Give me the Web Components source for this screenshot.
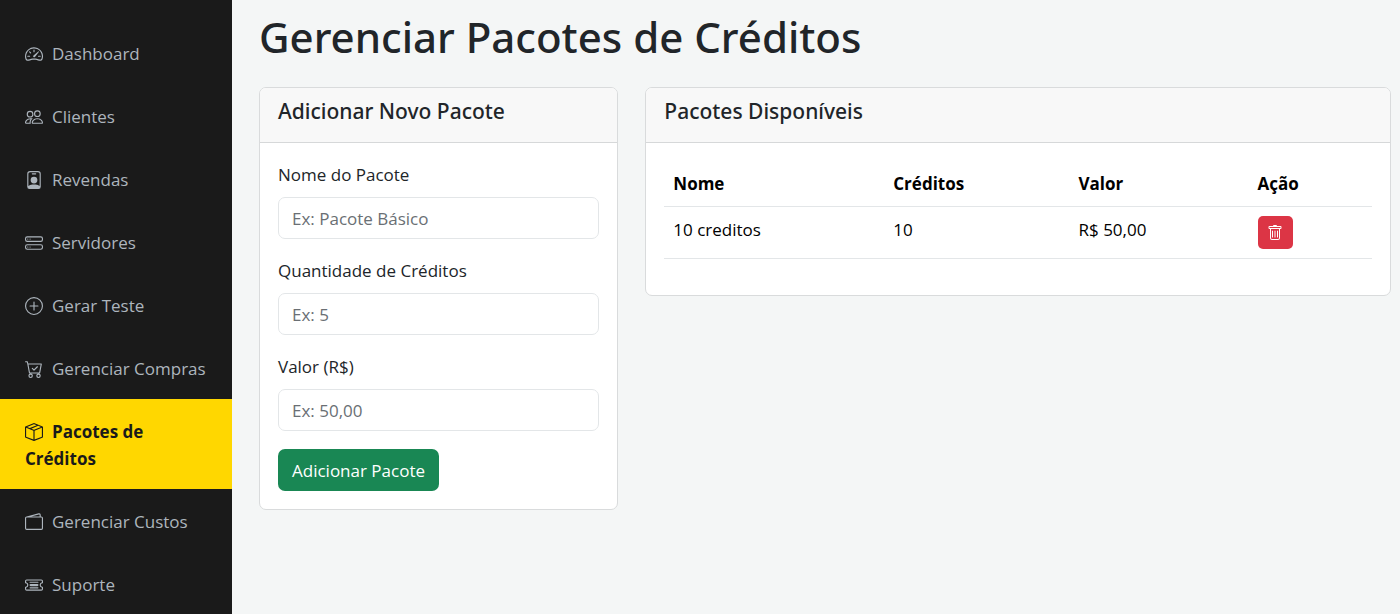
<!DOCTYPE html>
<html lang="pt-BR">
<head>
<meta charset="utf-8">
<meta name="viewport" content="width=device-width, initial-scale=1">
<title>Gerenciar Pacotes de Créditos</title>
<style>
  html, body { margin: 0; min-height: 100%; }
  body {
    background: #f4f6f6;
    color: #212529;
    font: 17px/27px "Open Sans", "Noto Sans", sans-serif;
  }
</style>
</head>
<body>
<app-shell>
  <side-nav slot="nav">
    <nav-item icon="speedometer">Dashboard</nav-item>
    <nav-item icon="people">Clientes</nav-item>
    <nav-item icon="badge">Revendas</nav-item>
    <nav-item icon="servers">Servidores</nav-item>
    <nav-item icon="plus">Gerar Teste</nav-item>
    <nav-item icon="cart">Gerenciar Compras</nav-item>
    <nav-item icon="box" active>Pacotes de Créditos</nav-item>
    <nav-item icon="wallet">Gerenciar Custos</nav-item>
    <nav-item icon="ticket">Suporte</nav-item>
  </side-nav>
  <page-title>Gerenciar Pacotes de Créditos</page-title>
  <card-row>
    <ui-card>
      <span slot="title">Adicionar Novo Pacote</span>
      <package-form></package-form>
    </ui-card>
    <ui-card>
      <span slot="title">Pacotes Disponíveis</span>
      <package-table></package-table>
    </ui-card>
  </card-row>
</app-shell>

<script>
const icons = {
  speedometer: '<path d="M8 4a.5.5 0 0 1 .5.5V6a.5.5 0 0 1-1 0V4.5A.5.5 0 0 1 8 4M3.732 5.732a.5.5 0 0 1 .707 0l.915.914a.5.5 0 1 1-.708.708l-.914-.915a.5.5 0 0 1 0-.707M2 10a.5.5 0 0 1 .5-.5h1.586a.5.5 0 0 1 0 1H2.5A.5.5 0 0 1 2 10m9.5 0a.5.5 0 0 1 .5-.5h1.5a.5.5 0 0 1 0 1H12a.5.5 0 0 1-.5-.5m.754-4.246a.39.39 0 0 0-.527-.02L7.547 9.31a.91.91 0 1 0 1.302 1.258l3.434-4.297a.39.39 0 0 0-.029-.518z"/><path fill-rule="evenodd" d="M0 10a8 8 0 1 1 15.547 2.661c-.442 1.253-1.845 1.602-2.932 1.25C11.309 13.488 9.475 13 8 13c-1.474 0-3.31.488-4.615.911-1.087.352-2.49.003-2.932-1.25A8 8 0 0 1 0 10m8-7a7 7 0 0 0-6.603 9.329c.203.575.923.876 1.68.63C4.397 12.533 6.358 12 8 12s3.604.532 4.923.96c.757.245 1.477-.056 1.68-.631A7 7 0 0 0 8 3"/>',
  people: '<path d="M15 14s1 0 1-1-1-4-5-4-5 3-5 4 1 1 1 1zm-7.978-1L7 12.996c.001-.264.167-1.03.76-1.72C8.312 10.629 9.282 10 11 10c1.717 0 2.687.63 3.24 1.276.593.69.758 1.457.76 1.72l-.008.002-.014.002zM11 7a2 2 0 1 0 0-4 2 2 0 0 0 0 4m3-2a3 3 0 1 1-6 0 3 3 0 0 1 6 0M6.936 9.28a6 6 0 0 0-1.23-.247A7 7 0 0 0 5 9c-4 0-5 3-5 4q0 1 1 1h4.216A2.24 2.24 0 0 1 5 13c0-1.01.377-2.042 1.09-2.904.243-.294.526-.569.846-.816M4.92 10A5.5 5.5 0 0 0 4 13H1c0-.26.164-1.03.76-1.724.545-.636 1.492-1.256 3.16-1.275ZM1.5 5.5a3 3 0 1 1 6 0 3 3 0 0 1-6 0m3-2a2 2 0 1 0 0 4 2 2 0 0 0 0-4"/>',
  badge: '<path d="M6.5 2a.5.5 0 0 0 0 1h3a.5.5 0 0 0 0-1zM11 8a3 3 0 1 1-6 0 3 3 0 0 1 6 0"/><path d="M4.5 0A2.5 2.5 0 0 0 2 2.5V14a2 2 0 0 0 2 2h8a2 2 0 0 0 2-2V2.5A2.5 2.5 0 0 0 11.5 0zM3 2.5A1.5 1.5 0 0 1 4.5 1h7A1.5 1.5 0 0 1 13 2.5v10.795a4.2 4.2 0 0 0-.776-.492C11.392 12.387 10.063 12 8 12s-3.392.387-4.224.803a4.2 4.2 0 0 0-.776.492z"/>',
  servers: '<path d="M14 10a1 1 0 0 1 1 1v1a1 1 0 0 1-1 1H2a1 1 0 0 1-1-1v-1a1 1 0 0 1 1-1zM2 9a2 2 0 0 0-2 2v1a2 2 0 0 0 2 2h12a2 2 0 0 0 2-2v-1a2 2 0 0 0-2-2z"/><path d="M5 11.5a.5.5 0 1 1-1 0 .5.5 0 0 1 1 0m-2 0a.5.5 0 1 1-1 0 .5.5 0 0 1 1 0M14 3a1 1 0 0 1 1 1v1a1 1 0 0 1-1 1H2a1 1 0 0 1-1-1V4a1 1 0 0 1 1-1zM2 2a2 2 0 0 0-2 2v1a2 2 0 0 0 2 2h12a2 2 0 0 0 2-2V4a2 2 0 0 0-2-2z"/><path d="M5 4.5a.5.5 0 1 1-1 0 .5.5 0 0 1 1 0m-2 0a.5.5 0 1 1-1 0 .5.5 0 0 1 1 0"/>',
  plus: '<path d="M8 15A7 7 0 1 1 8 1a7 7 0 0 1 0 14m0 1A8 8 0 1 0 8 0a8 8 0 0 0 0 16"/><path d="M8 4a.5.5 0 0 1 .5.5v3h3a.5.5 0 0 1 0 1h-3v3a.5.5 0 0 1-1 0v-3h-3a.5.5 0 0 1 0-1h3v-3A.5.5 0 0 1 8 4"/>',
  cart: '<path d="M11.354 6.354a.5.5 0 0 0-.708-.708L8 8.293 6.854 7.146a.5.5 0 1 0-.708.708l1.5 1.5a.5.5 0 0 0 .708 0z"/><path d="M.5 1a.5.5 0 0 0 0 1h1.11l.401 1.607 1.498 7.985A.5.5 0 0 0 4 12h1a2 2 0 1 0 0 4 2 2 0 0 0 0-4h7a2 2 0 1 0 0 4 2 2 0 0 0 0-4h1a.5.5 0 0 0 .491-.408l1.5-8A.5.5 0 0 0 14.5 3H2.89l-.405-1.621A.5.5 0 0 0 2 1zm3.915 10L3.102 4h10.796l-1.313 7zM6 14a1 1 0 1 1-2 0 1 1 0 0 1 2 0m7 0a1 1 0 1 1-2 0 1 1 0 0 1 2 0"/>',
  box: '<path d="M8.186 1.113a.5.5 0 0 0-.372 0L1.846 3.5l2.404.961L10.404 2zm3.564 1.426L5.596 5 8 5.961 14.154 3.5zm3.25 1.7-6.5 2.6v7.922l6.5-2.6V4.24zM7.5 14.762V6.838L1 4.239v7.923zM7.443.184a1.5 1.5 0 0 1 1.114 0l7.129 2.852A.5.5 0 0 1 16 3.5v8.662a1 1 0 0 1-.629.928l-7.185 2.874a.5.5 0 0 1-.372 0L.63 13.09a1 1 0 0 1-.63-.928V3.5a.5.5 0 0 1 .314-.464z"/>',
  wallet: '<path d="M12.136.326A1.5 1.5 0 0 1 14 1.78V3h.5A1.5 1.5 0 0 1 16 4.5v9a1.5 1.5 0 0 1-1.5 1.5h-13A1.5 1.5 0 0 1 0 13.5v-9a1.5 1.5 0 0 1 1.432-1.499zM5.562 3H13V1.78a.5.5 0 0 0-.621-.484zM1.5 4a.5.5 0 0 0-.5.5v9a.5.5 0 0 0 .5.5h13a.5.5 0 0 0 .5-.5v-9a.5.5 0 0 0-.5-.5z"/>',
  ticket: '<path d="M4 5.5a.5.5 0 0 1 .5-.5h7a.5.5 0 0 1 0 1h-7a.5.5 0 0 1-.5-.5m0 5a.5.5 0 0 1 .5-.5h7a.5.5 0 0 1 0 1h-7a.5.5 0 0 1-.5-.5M5 7a1 1 0 0 0 0 2h6a1 1 0 1 0 0-2z"/><path d="M0 4.5A1.5 1.5 0 0 1 1.5 3h13A1.5 1.5 0 0 1 16 4.5V6a.5.5 0 0 1-.5.5 1.5 1.5 0 0 0 0 3 .5.5 0 0 1 .5.5v1.5a1.5 1.5 0 0 1-1.5 1.5h-13A1.5 1.5 0 0 1 0 11.5V10a.5.5 0 0 1 .5-.5 1.5 1.5 0 1 0 0-3A.5.5 0 0 1 0 6zM1.5 4a.5.5 0 0 0-.5.5v1.05a2.5 2.5 0 0 1 0 4.9v1.05a.5.5 0 0 0 .5.5h13a.5.5 0 0 0 .5-.5v-1.05a2.5 2.5 0 0 1 0-4.9V4.5a.5.5 0 0 0-.5-.5z"/>',
  trash: '<path d="M5.5 5.5A.5.5 0 0 1 6 6v6a.5.5 0 0 1-1 0V6a.5.5 0 0 1 .5-.5m2.5 0a.5.5 0 0 1 .5.5v6a.5.5 0 0 1-1 0V6a.5.5 0 0 1 .5-.5m3 .5a.5.5 0 0 0-1 0v6a.5.5 0 0 0 1 0z"/><path d="M14.5 3a1 1 0 0 1-1 1H13v9a2 2 0 0 1-2 2H5a2 2 0 0 1-2-2V4h-.5a1 1 0 0 1-1-1V2a1 1 0 0 1 1-1H6a1 1 0 0 1 1-1h2a1 1 0 0 1 1 1h3.5a1 1 0 0 1 1 1zM4.118 4 4 4.059V13a1 1 0 0 0 1 1h6a1 1 0 0 0 1-1V4.059L11.882 4zM2.5 3h11V2h-11z"/>'
};

class BaseElement extends HTMLElement {
  constructor() {
    super();
    this.attachShadow({ mode: 'open' });
  }
  connectedCallback() {
    this.shadowRoot.innerHTML = this.render();
  }
}

class UiIcon extends BaseElement {
  render() {
    return `<style>
      :host { display: inline-block; width: 18px; height: 18px; }
      svg { display: block; width: 100%; height: 100%; fill: currentColor; }
    </style>
    <svg viewBox="0 0 16 16" aria-hidden="true">${icons[this.getAttribute('name')]}</svg>`;
  }
}

class AppShell extends BaseElement {
  render() {
    return `<style>
      :host { display: grid; grid-template-columns: 232px minmax(0, 1fr); min-height: 100vh; }
      main { padding: 10px 9px 27px 27px; }
    </style>
    <slot name="nav"></slot>
    <main><slot></slot></main>`;
  }
}

class SideNav extends BaseElement {
  render() {
    return `<style>
      :host { display: block; background: #1a1a1a; }
      nav { display: flex; flex-direction: column; padding-top: 21px; }
    </style>
    <nav><slot></slot></nav>`;
  }
}

class NavItem extends BaseElement {
  render() {
    return `<style>
      :host { display: block; color: #adb5bd; }
      :host([active]) { background: #ffd700; color: #1a1a1a; font-weight: 700; }
      a { display: block; padding: 19px 24px 17px 25px; color: inherit; text-decoration: none; }
      ui-icon { margin-right: 9px; vertical-align: -3px; }
    </style>
    <a href="#"><ui-icon name="${this.getAttribute('icon')}"></ui-icon><slot></slot></a>`;
  }
}

class PageTitle extends BaseElement {
  render() {
    return `<style>
      :host { display: block; margin-bottom: 23px; }
      h1 { margin: 0; font-family: "Noto Sans", "Open Sans", sans-serif; font-size: 42px; line-height: 54px; font-weight: 500; }
    </style>
    <h1><slot></slot></h1>`;
  }
}

class CardRow extends BaseElement {
  render() {
    return `<style>
      :host {
        display: grid;
        grid-template-columns: calc((100% + 27px) / 3 - 27px) minmax(0, 1fr);
        gap: 27px;
        align-items: start;
      }
    </style>
    <slot></slot>`;
  }
}

class UiCard extends BaseElement {
  render() {
    return `<style>
      :host { display: block; background: #fff; border: 1px solid #d9dbdc; border-radius: 7px; overflow: hidden; }
      header { padding: 10px 18px 17px; background: #f8f8f8; border-bottom: 1px solid #d6d8d9; }
      h2 { margin: 0; font-family: "Noto Sans", "Open Sans", sans-serif; font-size: 21px; line-height: 27px; font-weight: 500; }
      .body { padding: 18px; }
    </style>
    <header><h2><slot name="title"></slot></h2></header>
    <div class="body"><slot></slot></div>`;
  }
}

class PackageForm extends BaseElement {
  render() {
    return `<style>
      :host { display: block; }
      form { display: flex; flex-direction: column; align-items: flex-start; gap: 18px; }
      .field { display: flex; flex-direction: column; gap: 9px; width: 100%; }
      input, button { box-sizing: border-box; height: 42px; font: inherit; border-radius: 7px; }
      input { width: 100%; padding: 0 13px; color: inherit; background: #fff; border: 1px solid #e3e6e8; }
      input::placeholder { color: #6a6f74; opacity: 1; }
      button { padding: 0 14px; color: #fff; background: #198754; border: 0; }
    </style>
    <form>
      <div class="field">
        <label for="nome">Nome do Pacote</label>
        <input id="nome" type="text" placeholder="Ex: Pacote Básico">
      </div>
      <div class="field">
        <label for="creditos">Quantidade de Créditos</label>
        <input id="creditos" type="text" inputmode="numeric" placeholder="Ex: 5">
      </div>
      <div class="field">
        <label for="valor">Valor (R$)</label>
        <input id="valor" type="text" inputmode="decimal" placeholder="Ex: 50,00">
      </div>
      <button type="button">Adicionar Pacote</button>
    </form>`;
  }
}

class PackageTable extends BaseElement {
  render() {
    return `<style>
      :host { display: block; }
      table { width: 100%; margin-bottom: 18px; border-collapse: collapse; color: #000; }
      th, td { padding: 9px; text-align: left; vertical-align: top; border-bottom: 1px solid #e3e6e8; }
      th { font-weight: 700; }
      button {
        display: grid; place-items: center; width: 35px; height: 33px; padding: 0;
        color: #fff; background: #dc3545; border: 0; border-radius: 5px;
      }
      ui-icon { width: 16px; height: 16px; }
    </style>
    <table>
      <thead>
        <tr><th scope="col">Nome</th><th scope="col">Créditos</th><th scope="col">Valor</th><th scope="col">Ação</th></tr>
      </thead>
      <tbody>
        <tr>
          <td>10 creditos</td><td>10</td><td>R$ 50,00</td>
          <td><button type="button" aria-label="Excluir"><ui-icon name="trash"></ui-icon></button></td>
        </tr>
      </tbody>
    </table>`;
  }
}

customElements.define('ui-icon', UiIcon);
customElements.define('app-shell', AppShell);
customElements.define('side-nav', SideNav);
customElements.define('nav-item', NavItem);
customElements.define('page-title', PageTitle);
customElements.define('card-row', CardRow);
customElements.define('ui-card', UiCard);
customElements.define('package-form', PackageForm);
customElements.define('package-table', PackageTable);
</script>
</body>
</html>
